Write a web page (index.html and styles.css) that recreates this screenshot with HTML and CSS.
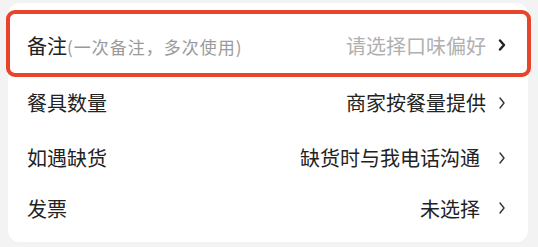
FILE: index.html
```html
<!DOCTYPE html>
<html lang="zh-CN">
<head>
  <meta charset="UTF-8" />
  <meta name="viewport" content="width=device-width, initial-scale=1.0" />
  <title>订单备注</title>
  <link rel="stylesheet" href="styles.css">
</head>
<body>
  <div class="card">
    <div class="row row-marked">
      <div class="label">备注<span class="hint">(一次备注，多次使用)</span></div>
      <div class="value placeholder">请选择口味偏好</div>
      <svg class="arrow bold" viewBox="0 0 8 12"><polyline points="2,1.5 6,6 2,10.5" /></svg>
    </div>
    <div class="row row-mid">
      <div class="label">餐具数量</div>
      <div class="value">商家按餐量提供</div>
      <svg class="arrow" viewBox="0 0 8 12"><polyline points="2,1 6,6 2,11" /></svg>
    </div>
    <div class="row row-mid">
      <div class="label">如遇缺货</div>
      <div class="value spaced">缺货时与我电话沟通</div>
      <svg class="arrow" viewBox="0 0 8 12"><polyline points="2,1 6,6 2,11" /></svg>
    </div>
    <div class="row row-last">
      <div class="label">发票</div>
      <div class="value spaced">未选择</div>
      <svg class="arrow" viewBox="0 0 8 12"><polyline points="2,1 6,6 2,11" /></svg>
    </div>
  </div>
</body>
</html>
```

FILE: styles.css
```css
:root {
  --text: #222;
  --muted: #9a9a9a;
  --red: #e8432b;
}

html, body {
  margin: 0;
  padding: 0;
  background: #f3f3f3;
  font-family: "Noto Sans CJK SC", "Noto Sans", sans-serif;
  color: var(--text);
}

.card {
  margin: 3px 10px 5px 8px;
  background: #fff;
  border-radius: 12px;
  display: flex;
  flex-direction: column;
  padding: 12px 0 11px;
}

.row {
  display: flex;
  align-items: center;
  padding: 0 22px 0 19px;
  font-size: 20px;
}

.row-marked {
  position: relative;
  height: 60px;
}
.row-mid { height: 55px; }
.row-last { height: 46px; }

/* red highlight frame drawn over the first row */
.row-marked::after {
  content: "";
  position: absolute;
  left: -2px;
  right: -3px;
  top: -5px;
  bottom: -2px;
  border: 4px solid var(--red);
  border-radius: 9px;
  pointer-events: none;
}

.label {
  flex: 1;
  white-space: nowrap;
}

.hint {
  font-size: 17px;
  letter-spacing: 1px;
  color: var(--muted);
}

.value {
  white-space: nowrap;
}
.value.spaced { margin-right: 6px; }

.placeholder {
  color: #b0b0b0;
}

.arrow {
  width: 8px;
  height: 12px;
  margin-left: 12px;
  fill: none;
  stroke: #333;
  stroke-width: 1.4;
  stroke-linecap: round;
  stroke-linejoin: round;
}

.arrow.bold {
  stroke: #222;
  stroke-width: 2.4;
}
```
